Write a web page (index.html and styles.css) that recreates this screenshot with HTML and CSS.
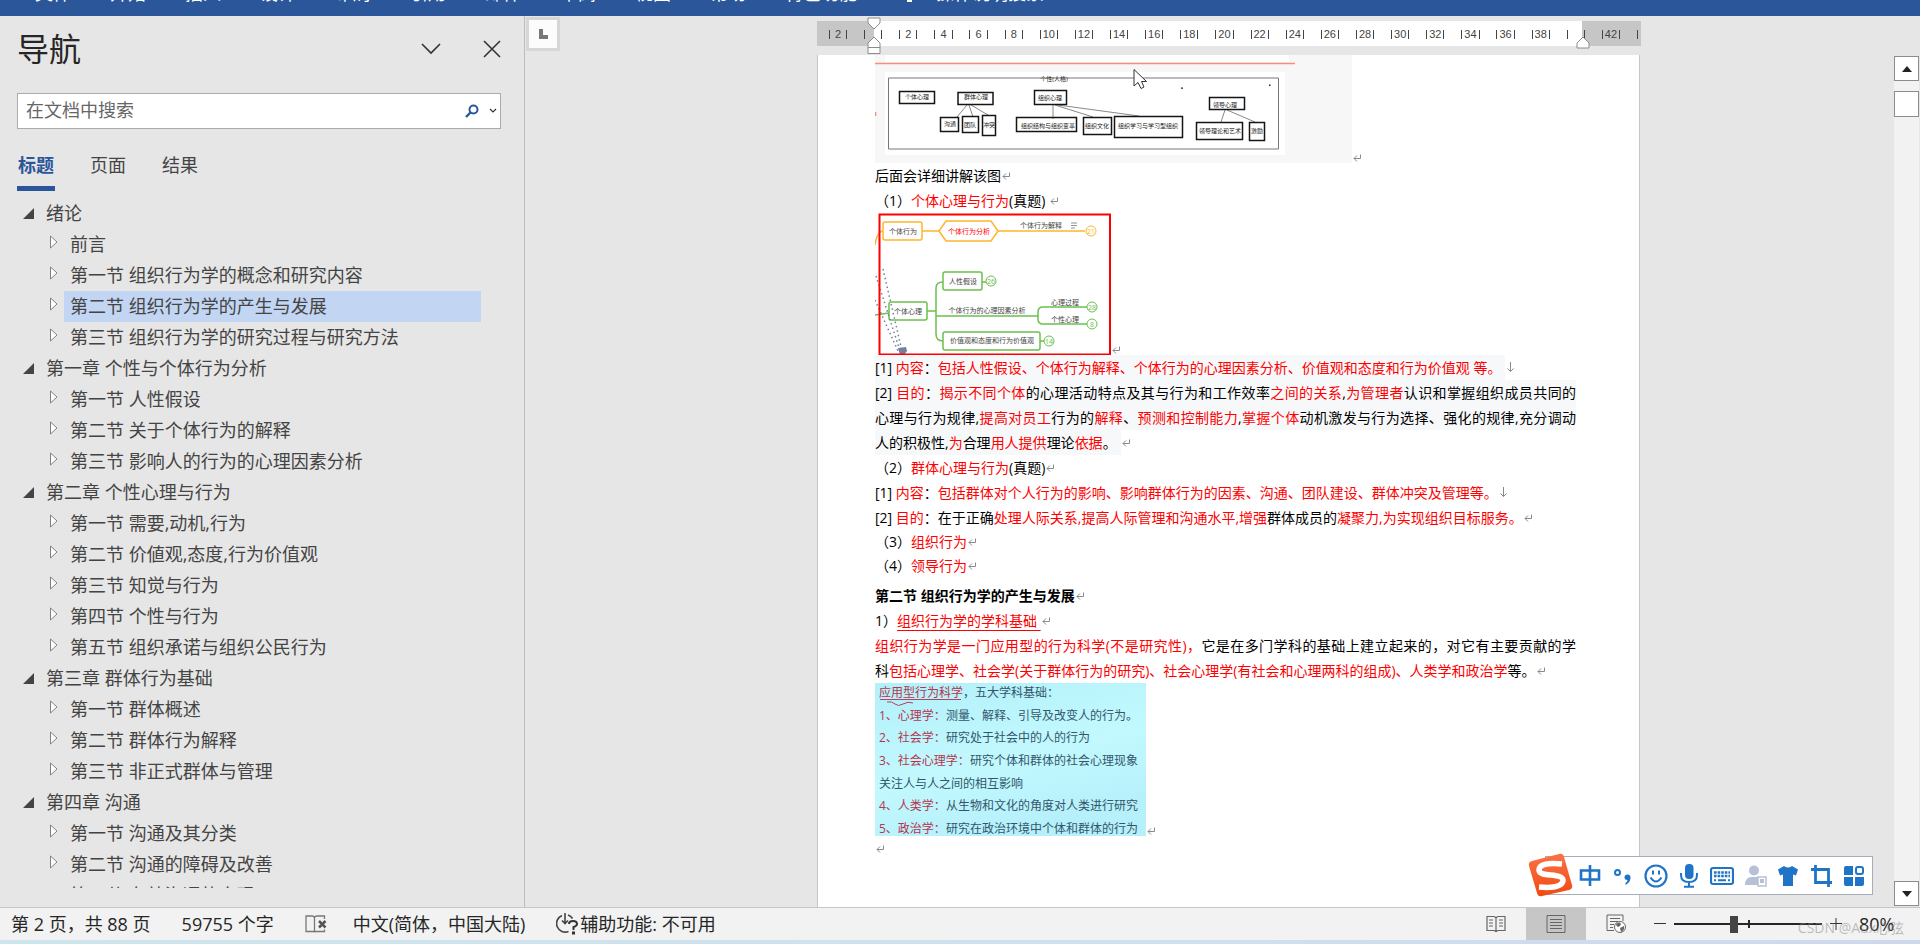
FILE: index.html
```html
<!DOCTYPE html>
<html lang="zh-CN">
<head>
<meta charset="utf-8">
<title>文档编辑器</title>
<link rel="stylesheet" href="styles.css">
</head>
<body>
<svg class="defs" aria-hidden="true">
  <symbol id="ret" viewBox="0 0 9 9"><path d="M7.5 0.5V4.5H1M4 1.5L1 4.5L4 7.5" fill="none" stroke="#8a8a8a"/></symbol>
  <symbol id="down" viewBox="0 0 9 11"><path d="M4.5 0V9.5M1.5 6.5L4.5 9.5L7.5 6.5" fill="none" stroke="#8a8a8a"/></symbol>
  <symbol id="tri" viewBox="0 0 8 14"><path d="M.5 1L7 7L.5 13z" fill="#fff" stroke="#808080"/></symbol>
</svg>
<div class="app">
  <header class="ribbon">
    <a href="#">文件</a><a href="#">开始</a><a href="#">插入</a><a href="#">设计</a><a href="#">布局</a><a href="#">引用</a><a href="#">邮件</a><a href="#">审阅</a><a href="#">视图</a><a href="#">帮助</a><a href="#">特色功能</a>
    <a href="#" class="tell"><svg width="10" height="20" viewBox="0 0 10 20"><path d="M1 11h8v5H1zM3 17h5v2H3z" fill="#fff"/></svg>操作说明搜索</a>
  </header>

  <main class="workspace">
    <aside class="nav">
      <div class="nav-head">
        <h1>导航</h1>
        <button aria-label="选项"><svg width="20" height="20" viewBox="0 0 20 20"><path d="M1 5L10 14L19 5" fill="none" stroke="#333" stroke-width="1.6"/></svg></button>
        <button aria-label="关闭"><svg width="18" height="18" viewBox="0 0 18 18"><path d="M1 1L17 17M17 1L1 17" fill="none" stroke="#333" stroke-width="1.6"/></svg></button>
      </div>
      <div class="search">
        <input type="text" placeholder="在文档中搜索" aria-label="在文档中搜索">
        <button aria-label="搜索"><svg width="14" height="14" viewBox="0 0 14 14"><circle cx="8.5" cy="5.5" r="4" fill="none" stroke="#2b579a" stroke-width="2"/><path d="M5.5 8.5L1 13" stroke="#2b579a" stroke-width="2.4"/></svg></button>
        <button aria-label="搜索选项"><svg width="8" height="6" viewBox="0 0 8 6"><path d="M1 1L4 4L7 1" fill="none" stroke="#333" stroke-width="1.2"/></svg></button>
      </div>
      <div class="tabs"><button class="active">标题</button><button>页面</button><button>结果</button></div>
      <ul class="tree">
        <li class="l1"><button aria-label="折叠"></button><a href="#">绪论</a></li>
        <li class="l2"><button aria-label="展开"><svg><use href="#tri"/></svg></button><a href="#">前言</a></li>
        <li class="l2"><button aria-label="展开"><svg><use href="#tri"/></svg></button><a href="#">第一节 组织行为学的概念和研究内容</a></li>
        <li class="l2 selected"><button aria-label="展开"><svg><use href="#tri"/></svg></button><a href="#">第二节 组织行为学的产生与发展</a></li>
        <li class="l2"><button aria-label="展开"><svg><use href="#tri"/></svg></button><a href="#">第三节 组织行为学的研究过程与研究方法</a></li>
        <li class="l1"><button aria-label="折叠"></button><a href="#">第一章 个性与个体行为分析</a></li>
        <li class="l2"><button aria-label="展开"><svg><use href="#tri"/></svg></button><a href="#">第一节 人性假设</a></li>
        <li class="l2"><button aria-label="展开"><svg><use href="#tri"/></svg></button><a href="#">第二节 关于个体行为的解释</a></li>
        <li class="l2"><button aria-label="展开"><svg><use href="#tri"/></svg></button><a href="#">第三节 影响人的行为的心理因素分析</a></li>
        <li class="l1"><button aria-label="折叠"></button><a href="#">第二章 个性心理与行为</a></li>
        <li class="l2"><button aria-label="展开"><svg><use href="#tri"/></svg></button><a href="#">第一节 需要,动机,行为</a></li>
        <li class="l2"><button aria-label="展开"><svg><use href="#tri"/></svg></button><a href="#">第二节 价値观,态度,行为价值观</a></li>
        <li class="l2"><button aria-label="展开"><svg><use href="#tri"/></svg></button><a href="#">第三节 知觉与行为</a></li>
        <li class="l2"><button aria-label="展开"><svg><use href="#tri"/></svg></button><a href="#">第四节 个性与行为</a></li>
        <li class="l2"><button aria-label="展开"><svg><use href="#tri"/></svg></button><a href="#">第五节 组织承诺与组织公民行为</a></li>
        <li class="l1"><button aria-label="折叠"></button><a href="#">第三章 群体行为基础</a></li>
        <li class="l2"><button aria-label="展开"><svg><use href="#tri"/></svg></button><a href="#">第一节 群体概述</a></li>
        <li class="l2"><button aria-label="展开"><svg><use href="#tri"/></svg></button><a href="#">第二节 群体行为解释</a></li>
        <li class="l2"><button aria-label="展开"><svg><use href="#tri"/></svg></button><a href="#">第三节 非正式群体与管理</a></li>
        <li class="l1"><button aria-label="折叠"></button><a href="#">第四章 沟通</a></li>
        <li class="l2"><button aria-label="展开"><svg><use href="#tri"/></svg></button><a href="#">第一节 沟通及其分类</a></li>
        <li class="l2"><button aria-label="展开"><svg><use href="#tri"/></svg></button><a href="#">第二节 沟通的障碍及改善</a></li>
        <li class="l2 last"><button aria-label="展开"></button><a href="#">第三节 有效沟通的实现</a></li>
      </ul>
    </aside>

    <div class="corner"><button aria-label="制表符"><svg width="9" height="10" viewBox="0 0 9 10"><path d="M2 0V8H9" fill="none" stroke="#777" stroke-width="4"/></svg></button></div>

    <section class="canvas">
      <div class="ruler">
        <span><i>2</i></span><span><i></i></span><span><i>2</i></span><span><i>4</i></span><span><i>6</i></span><span><i>8</i></span><span><i>10</i></span><span><i>12</i></span><span><i>14</i></span><span><i>16</i></span><span><i>18</i></span><span><i>20</i></span><span><i>22</i></span><span><i>24</i></span><span><i>26</i></span><span><i>28</i></span><span><i>30</i></span><span><i>32</i></span><span><i>34</i></span><span><i>36</i></span><span><i>38</i></span><span><i></i></span><span><i>42</i></span><b></b>
        <svg class="indent left" width="14" height="38" viewBox="0 0 14 38"><path d="M1 1h12v5L7 12L1 6zM1 36.500V26L7 20L13 26V36.500zM1 30.500h12" fill="#fff" stroke="#8c8c8c"/></svg>
        <svg class="indent right" width="14" height="38" viewBox="0 0 14 38"><path d="M1 31V26L7 20L13 26V31z" fill="#fff" stroke="#8c8c8c"/></svg>
      </div>

      <article class="page">
        <div class="picture">
          <svg width="477" height="108" viewBox="875 55 477 108" font-size="6" text-anchor="middle" fill="#222">
            <path d="M875 55h477v108H875z" fill="#f7f7f7"/><path d="M885 55h404v7H885zM885 72h400v83H885z" fill="#fff"/>
            <path d="M875 63.500h420M875.500 112v4" stroke="#fa8c7c" stroke-width="1.600"/>
            <path d="M888.500 78h390v71h-390z" fill="none" stroke="#777"/>
            <g fill="none" stroke="#555" stroke-width="0.700"><path d="M967 105L957 117M969 105L973 117M971 105L988 115M1053 105V119M1055 105L1093 117M1058 105L1139 116M1225 110L1221 122M1227 110L1255 122"/></g>
            <g fill="none" stroke="#151515" stroke-width="1.500"><path d="M899.500 91.500h35v12h-35zM958 92.500h35v12h-35zM1034.500 90.500h32v14h-32zM1209.500 97.500h35v12h-35zM940.500 117.500h18v14h-18zM962.500 116.500h16v16h-16zM982.500 115.500h13v20h-13zM1016.500 117.500h60v14h-60zM1083.500 117.500h28v17h-28zM1114.500 116.500h68v21h-68zM1196.500 122.500h46v17h-46zM1249.500 122.500h15v18h-15z"/></g>
            <text x="1054" y="81">个性(人格)</text><text x="917" y="99">个体心理</text><text x="976" y="99">群体心理</text><text x="1050" y="100">组织心理</text><text x="1225" y="107">领导心理</text><text x="950" y="126">沟通</text><text x="970" y="127">团队</text><text x="989" y="127">冲突</text><text x="1048" y="128">组织结构与组织变革</text><text x="1097" y="128">组织文化</text><text x="1148" y="128">组织学习与学习型组织</text><text x="1220" y="133">领导理论和艺术</text><text x="1257" y="133">激励</text>
            <path d="M1181 87.500h2v1.200h-2zM1269 84.500h1.500v1.500h-1.500z"/>
            <path d="M1134 69.500V86L1138 82.500L1141 88.500L1144 87L1141.500 81.500H1146.500z" fill="#fff" stroke="#333"/>
          </svg><svg class="mark"><use href="#ret"/></svg>
        </div>
        <p>后面会详细讲解该图<svg class="mark"><use href="#ret"/></svg></p>
        <p>（1）<em>个体心理与行为</em>(真题) <svg class="mark"><use href="#ret"/></svg></p>
        <div class="picture">
          <svg width="236" height="142" viewBox="875 213 236 142" font-size="7" fill="#444" text-anchor="middle">
            <path d="M875 245Q877 231 883 231M922 231h17M998 231h87" fill="none" stroke="#fdb72b" stroke-width="1.500"/>
            <rect x="883" y="222" width="39" height="18" rx="2" fill="#fff" stroke="#fdb72b" stroke-width="1.500"/>
            <path d="M946 221h45l7 10l-7 10h-45l-7-10z" fill="#fff" stroke="#fdb72b" stroke-width="1.500"/>
            <circle cx="1091" cy="231" r="5" fill="#fff" stroke="#fdb72b"/>
            <path d="M1071 223h6M1071 225.500h6M1071 228h4" stroke="#777" stroke-width="0.800"/>
            <g fill="none" stroke="#6cc04f" stroke-width="1.500"><path d="M875 315l14-2M927 311h9M943 282Q936 282 936 288V334Q936 341 943 341M936 316h102M1087 307h-44q-5 0-5 5v7q0 5 5 5h44M982 282h5M1040 341h5"/><rect x="889" y="302" width="38" height="18" rx="2"/><rect x="943" y="272" width="39" height="18" rx="2"/><rect x="943" y="332" width="97" height="18" rx="2"/></g>
            <g fill="#fff" stroke="#6cc04f"><circle cx="991" cy="281" r="5"/><circle cx="1092" cy="307" r="5"/><circle cx="1092" cy="324" r="5"/><circle cx="1049" cy="341" r="5"/></g>
            <path d="M883 269L902 351M876 276L900 351M875 300L898 351" fill="none" stroke="#74809a" stroke-width="1.500" stroke-dasharray="1.500 3"/>
            <path d="M898 348l8-1l1 4l-3 4h-4z" fill="#74809a"/>
            <text x="903" y="234">个体行为</text><text x="969" y="234" fill="#f00">个体行为分析</text><text x="1041" y="228">个体行为解释</text><text x="963" y="284">人性假设</text><text x="908" y="314">个体心理</text><text x="987" y="313">个体行为的心理因素分析</text><text x="1065" y="305">心理过程</text><text x="1065" y="322">个性心理</text><text x="992" y="343">价值观和态度和行为价值观</text>
            <text x="1091" y="234" fill="#fdb72b">21</text><g fill="#6cc04f"><text x="991" y="284">26</text><text x="1092" y="310">28</text><text x="1092" y="327">8</text><text x="1049" y="344">14</text></g>
            <path d="M879.500 214.500h230.500v140h-230.500z" fill="none" stroke="#f00" stroke-width="2"/>
          </svg><svg class="mark"><use href="#ret"/></svg>
        </div>
        <p><span class="shade fit">[1] <em>内容</em>：<em>包括人性假设、个体行为解释、个体行为的心理因素分析、价值观和态度和行为价值观 等。</em></span><svg class="mark tall"><use href="#down"/></svg></p>
        <p><span class="shade full">[2] <em>目的</em>：<em>揭示不同个体</em>的心理活动特点及其与行为和工作效率<em>之间的关系</em>,<em>为管理者</em>认识和掌握组织成员共同的</span><span class="shade full">心理与行为规律,<em>提高对员工</em>行为的<em>解释</em>、<em>预测和控制能力</em>,<em>掌握个体</em>动机激发与行为选择、强化的规律,充分调动</span><span class="shade fit">人的积极性,<em>为</em>合理<em>用人提供</em>理论<em>依据</em>。</span><svg class="mark"><use href="#ret"/></svg></p>
        <p>（2）<em>群体心理与行为</em>(真题)<svg class="mark"><use href="#ret"/></svg></p>
        <p>[1] <em>内容</em>：<em>包括群体对个人行为的影响、影响群体行为的因素、沟通、团队建设、群体冲突及管理等。</em><svg class="mark tall"><use href="#down"/></svg></p>
        <p>[2] <em>目的</em>：在于正确<em>处理人际关系,提高人际管理和沟通水平,增强</em>群体成员的<em>凝聚力,为实现组织目标服务。</em><svg class="mark"><use href="#ret"/></svg></p>
        <p class="item">（3）<em>组织行为</em><svg class="mark"><use href="#ret"/></svg></p>
        <p class="item">（4）<em>领导行为</em><svg class="mark"><use href="#ret"/></svg></p>
        <h2>第二节 组织行为学的产生与发展<svg class="mark"><use href="#ret"/></svg></h2>
        <p>1）<em class="under">组织行为学的学科基础&nbsp;</em><svg class="mark"><use href="#ret"/></svg></p>
        <p><span class="full"><em>组织行为学是一门应用型的行为科学(不是研究性)，</em>它是在多门学科的基础上建立起来的，对它有主要贡献的学</span>科<em>包括心理学、社会学(关于群体行为的研究)、社会心理学(有社会和心理两科的组成)、人类学和政治学</em>等。<svg class="mark"><use href="#ret"/></svg></p>
        <div class="picture">
          <svg width="271" height="153" viewBox="875 682 271 153" font-size="12" fill="#33566b">
            <defs><linearGradient id="cyan" x1="0" y1="0" x2="0.400" y2="1"><stop offset="0" stop-color="#b2f0fa"/><stop offset="0.600" stop-color="#c2f9fe"/><stop offset="1" stop-color="#b6f0fb"/></linearGradient></defs>
            <path d="M875 682h271v153H875z" fill="url(#cyan)"/>
            <path d="M880 698.500h81M887 701q5-1 8 2t8 0t10-1" fill="none" stroke="#b8405a"/>
            <text x="879" y="696"><tspan fill="#b5354f">应用型行为科学</tspan>，五大学科基础：</text>
            <text x="879" y="719"><tspan fill="#b5354f">1、心理学：</tspan>测量、解释、引导及改变人的行为。</text>
            <text x="879" y="741"><tspan fill="#b5354f">2、社会学：</tspan>研究处于社会中的人的行为</text>
            <text x="879" y="764"><tspan fill="#b5354f">3、社会心理学：</tspan>研究个体和群体的社会心理现象</text>
            <text x="879" y="787">关注人与人之间的相互影响</text>
            <text x="879" y="809"><tspan fill="#b5354f">4、人类学：</tspan>从生物和文化的角度对人类进行研究</text>
            <text x="879" y="832"><tspan fill="#b5354f">5、政治学：</tspan>研究在政治环境中个体和群体的行为</text>
          </svg><svg class="mark"><use href="#ret"/></svg>
        </div>
        <p><svg class="mark"><use href="#ret"/></svg></p>
      </article>
    </section>

    <div class="scroll">
      <button aria-label="向上滚动"><svg width="10" height="6" viewBox="0 0 10 6"><path d="M0 6L5 0L10 6z" fill="#222"/></svg></button>
      <div class="track"><div class="thumb"></div></div>
      <button aria-label="向下滚动"><svg width="10" height="6" viewBox="0 0 10 6"><path d="M0 0L5 6L10 0z" fill="#222"/></svg></button>
    </div>
  </main>

  <footer class="status">
    <span>第 2 页，共 88 页</span><span>59755 个字</span>
    <svg class="proof" width="22" height="20" viewBox="0 0 22 20"><path d="M9.500 17.500H1V2h6q2.500 0 2.500 2v14.500M9.500 4Q9.500 2 12 2h7.500v3M9.500 17.500H19.500v-2" fill="none" stroke="#777" stroke-width="1.300"/><path d="M14 7l6.500 6.500M20.500 7L14 13.500" stroke="#555" stroke-width="2.500"/></svg>
    <span>中文(简体，中国大陆)</span>
    <span class="access"><svg width="22" height="22" viewBox="0 0 22 22"><path d="M6 2.500A8.500 8.500 0 0 0 12.500 18.500M9 0V10M6 7.500L9 10.500L12 7.500M12 2Q15 3 16.500 5.500" fill="none" stroke="#444" stroke-width="1.600"/><path d="M13 11q0-3 4-3t4 3q0 2-3.500 3v3" fill="none" stroke="#333" stroke-width="2"/><path d="M16 18.500h3v3h-3z" fill="#333"/></svg>辅助功能: 不可用</span>
    <div class="views">
      <button aria-label="阅读视图"><svg width="20" height="18" viewBox="0 0 20 18"><path d="M10 2.500V17M1 1.500h7l2 1l2-1h7v14h-7l-2 1l-2-1H1zM3 5h4M3 8h4M3 11h4M13 5h4M13 8h4M13 11h4" fill="none" stroke="#666" stroke-width="1.200"/></svg></button>
      <button class="on" aria-label="页面视图"><svg width="20" height="18" viewBox="0 0 20 18"><path d="M1 .500h18v17H1zM4 4.500h12M4 7.500h12M4 10.500h12M4 13.500h12" fill="none" stroke="#666"/></svg></button>
      <button aria-label="Web 版式"><svg width="20" height="20" viewBox="0 0 20 20"><path d="M8 16.500H1V1h16v6M4 4.500h10M4 7.500h8M4 10.500h4M4 13.500h3" fill="none" stroke="#666"/><circle cx="14" cy="13" r="5.500" fill="#fff" stroke="#666"/><path d="M10 10q4-3 5 0q-1 3-3 3q-2-1-2-3M14 14l4-2q1 4-3 6z" fill="#666"/></svg></button>
    </div>
    <div class="zoom">
      <button aria-label="缩小"><svg width="12" height="12" viewBox="0 0 12 12"><path d="M0 5.500h12" stroke="#333"/></svg></button>
      <input type="range" min="0" max="100" value="40" aria-label="缩放">
      <button aria-label="放大"><svg width="12" height="12" viewBox="0 0 12 12"><path d="M0 5.500h12M6 0v12" stroke="#333"/></svg></button>
      <span>80%</span>
    </div>
  </footer>
  <div class="desktop"></div>

  <div class="ime">
    <svg class="logo" width="46" height="46" viewBox="0 0 46 46"><defs><linearGradient id="org" x1="0" y1="0" x2="0" y2="1"><stop offset="0" stop-color="#fb7345"/><stop offset="1" stop-color="#f04a10"/></linearGradient></defs><path d="M5 8L32 1Q36 0 37 4L45 32Q46 36 42 37L15 43Q11 44 10 40L2 13Q1 9 5 8z" fill="url(#org)"/><path d="M35 11Q12 9 12 17C12 25 37 19 36 28Q34 36 12 34" fill="none" stroke="#fff" stroke-width="5.500"/></svg>
    <button aria-label="中文"><svg viewBox="0 0 24 24"><path d="M3 6.500h18v9H3zM12 1v21" fill="none" stroke="#1f74c8" stroke-width="2.600"/></svg></button>
    <button aria-label="标点"><svg viewBox="0 0 24 24"><circle cx="6.500" cy="8.500" r="2.500" fill="none" stroke="#1f74c8" stroke-width="2"/><path d="M13.500 13.500a3 3 0 1 1 6 0q0 5-5 7.500v-2q2-1 2-3q-3 0-3-2.500z" fill="#1f74c8"/></svg></button>
    <button aria-label="表情"><svg viewBox="0 0 24 24"><circle cx="12" cy="12" r="10.500" fill="none" stroke="#1f74c8" stroke-width="2.200"/><path d="M6.500 13.500q5.500 8 11 0" fill="none" stroke="#1f74c8" stroke-width="2"/><path d="M8 6.500h2v4H8zM14 6.500h2v4h-2z" fill="#1f74c8"/></svg></button>
    <button aria-label="语音"><svg viewBox="0 0 24 24"><rect x="8" y="0" width="8.500" height="15" rx="4" fill="#1f74c8"/><path d="M4 9v2q0 7 8 7t8-7V9M12 18v4M7 22.800h10" fill="none" stroke="#1f74c8" stroke-width="2"/></svg></button>
    <button aria-label="键盘"><svg viewBox="0 0 24 24"><rect x="1" y="4" width="22" height="16" rx="2" fill="none" stroke="#1f74c8" stroke-width="2.200"/><path d="M4 8.500h16M4 12h16" stroke="#1f74c8" stroke-width="2.400" stroke-dasharray="2.600 1"/><path d="M4 16.200h2M8 16.200h8M18 16.200h2" stroke="#1f74c8" stroke-width="2"/></svg></button>
    <button aria-label="账户"><svg viewBox="0 0 24 24"><circle cx="11" cy="6.500" r="5" fill="#b6c0d6"/><path d="M2 21q0-8 7-8h10v8z" fill="#b6c0d6"/><rect x="15" y="13" width="8" height="9" fill="#fff" stroke="#b6c0d6" stroke-width="1.500"/><path d="M17 15h4v4h-4z" fill="#b6c0d6"/></svg></button>
    <button aria-label="皮肤"><svg viewBox="0 0 24 24"><path d="M8 2q4 3 8 0l6 3.500l-2 6l-3-1V22H7V10.500l-3 1l-2-6z" fill="#1f74c8"/></svg></button>
    <button aria-label="截图"><svg viewBox="0 0 24 24"><path d="M2 5.500h17.500V23M6.500 1v17.500H23" fill="none" stroke="#1f74c8" stroke-width="2.800"/></svg></button>
    <button aria-label="工具箱"><svg viewBox="0 0 24 24"><path d="M2 4q0-2 2-2h7v9H2zM2 13h9v9H4q-2 0-2-2zM13 13h9v7q0 2-2 2h-7z" fill="#1f74c8"/><rect x="14" y="3" width="7" height="7" rx="2" fill="none" stroke="#1f74c8" stroke-width="2"/></svg></button>
  </div>
  <div class="watermark">CSDN @Aux心弦</div>
</div>
</body>
</html>
```
FILE: styles.css
```css
* { box-sizing: border-box; }
body { margin: 0; background: #e6e6e6; color: #333; font: 18px/24px "Open Sans", "Noto Sans CJK SC", sans-serif; }
button { display: flex; align-items: center; justify-content: center; padding: 0; border: 0; background: none; color: inherit; font: inherit; }
a { color: inherit; text-decoration: none; }
svg { flex: none; }
.defs { position: absolute; width: 0; height: 0; }
.app { position: relative; display: flex; flex-direction: column; height: 100vh; overflow: hidden; }

.ribbon { display: flex; align-items: flex-end; gap: 39px; flex: none; height: 16px; padding: 0 35px 11px; background: #2b579a; color: #fff; white-space: nowrap; }
.ribbon a { line-height: 24px; }
.ribbon .tell { display: flex; align-items: center; gap: 22px; padding-left: 8px; }

.workspace { display: flex; flex: 1; min-height: 0; }

.nav { display: flex; flex-direction: column; width: 525px; padding: 12px 23px 19px 17px; border-right: 1px solid #bdbdbd; }
.nav-head { display: flex; align-items: center; height: 44px; padding-bottom: 3px; gap: 42px; }
.nav-head h1 { flex: 1; margin: 0; font-size: 32px; font-weight: 400; line-height: 42px; color: #262626; }
.search { display: flex; align-items: center; gap: 10px; flex: none; height: 36px; margin-top: 21px; padding: 0 3px 0 8px; border: 1px solid #ababab; background: #fff; }
.search input { flex: 1; min-width: 0; padding: 0 0 3px; border: 0; outline: 0; background: none; font: inherit; }
.search input::placeholder { color: #666; opacity: 1; }
.tabs { display: flex; gap: 34px; flex: none; margin: 23px 0 7px; color: #444; }
.tabs button { height: 39px; padding: 0 1px 8px; border-bottom: 5px solid transparent; }
.tabs .active { border-color: #2b579a; color: #2b579a; font-weight: 700; }
.tree { flex: 1; min-height: 0; margin: 0; padding: 0 20px 0 0; overflow: hidden; list-style: none; color: #444; }
.tree li { display: flex; align-items: center; height: 31px; }
.tree a { flex: 1; line-height: 31px; white-space: nowrap; }
.l1 { padding-left: 6px; }
.l1 button { width: 11px; height: 11px; margin-right: 12px; background: #444; clip-path: polygon(100% 0, 100% 100%, 0 100%); }
.l2 { padding-left: 33px; }
.l2 button { width: 8px; height: 14px; margin: 0 6px 6px 0; }
.l2 button svg { width: 8px; height: 14px; }
.l2 a { padding-left: 6px; }
.selected a { background: #c2d5f2; }

.corner { width: 36px; padding: 1px 0 0 1px; }
.corner button { width: 34px; height: 34px; border: 3px solid #d6d6d6; background: #fcfcfc; }

.canvas { display: flex; flex: 1; flex-direction: column; align-items: center; min-width: 0; padding: 5px 0 0 3px; }
.ruler { position: relative; display: grid; grid-template-columns: repeat(23, 1fr) 12px; flex: none; align-items: center; width: 824px; height: 25px; padding: 1px 0 0 4px; background: linear-gradient(90deg, #c6c6c6 57px, #fff 57px, #fff calc(100% - 59px), #c6c6c6 calc(100% - 59px)); }
.ruler span { display: flex; justify-content: center; }
.ruler i { width: 52%; height: 9px; border: solid #444; border-width: 0 1px; color: #444; font: normal 11px/9px "Liberation Sans", sans-serif; text-align: center; }
.ruler b { height: 9px; margin-left: 8px; border-left: 1px solid #444; }
.indent { position: absolute; top: -4px; }
.indent.left { left: 50px; }
.indent.right { right: 51px; }

.page { flex: 1; width: 823px; min-height: 0; margin-top: 9px; padding: 0 63px 0 57px; overflow: hidden; border: solid #c6c6c6; border-width: 0 1px; background: #fff; color: #000; font-size: 14px; line-height: 25px; }
.page p, .page h2 { margin: 0; font-size: 14px; min-height: 25px; white-space: nowrap; }
.page .item { min-height: 24px; line-height: 24px; }
.page h2 { margin-top: 5px; }
.page em { color: #f00; font-style: normal; }
.page .under { text-decoration: underline; text-underline-offset: 4px; }
.full { display: block; text-align: justify; text-align-last: justify; }
.fit { display: inline-block; vertical-align: top; padding-right: 4px; }
.shade { background: #f7f8fa; }
.picture { display: flex; align-items: flex-end; }
.picture .mark { margin-left: 1px; }
.mark { width: 9px; height: 9px; margin-left: 1px; }
.mark.tall { height: 11px; }

.scroll { display: flex; flex-direction: column; width: 27px; padding: 40px 1px 1px; }
.scroll button { width: 25px; height: 25px; border: 1px solid #8c8c8c; background: #fff; }
.track { flex: 1; padding-top: 10px; background: #f2f2f2; }
.thumb { width: 25px; height: 26px; border: 1px solid #8c8c8c; background: #fff; }

.status { display: flex; align-items: center; flex: none; height: 33px; padding-left: 11px; border-top: 1px solid #c6c6c6; background: #f2f2f2; color: #262626; gap: 31px; white-space: nowrap; }
.proof { margin-right: -5px; }
.access { display: flex; align-items: center; gap: 2px; }
.views { display: flex; align-self: stretch; margin-left: auto; }
.views button { width: 60px; }
.views .on { background: #c6c6c6; }
.zoom { display: flex; align-items: center; gap: 8px; width: 266px; margin-left: -23px; }
.zoom span { margin-left: 9px; }
.zoom input { width: 148px; height: 18px; margin: 0; appearance: none; background: linear-gradient(#262626, #262626) 74px 5px / 2px 8px no-repeat, linear-gradient(#262626, #262626) 0 8px / 100% 2px no-repeat; }
.zoom input::-webkit-slider-thumb { appearance: none; width: 8px; height: 17px; background: #444; }
.desktop { flex: none; height: 4px; background: linear-gradient(90deg, #cde5ec, #cfe0ee 60%, #cdd9ec); }

.ime { position: absolute; right: 47px; bottom: 49px; display: flex; align-items: center; gap: 9px; height: 39px; padding: 0 6px 0 32px; border: 1px solid #a7adba; background: #fff; }
.ime .logo { position: absolute; left: -19px; top: -4px; }
.ime button, .ime button svg { width: 24px; height: 24px; }
.watermark { position: absolute; right: 16px; bottom: 4px; color: #8888; font-size: 14px; }
```
